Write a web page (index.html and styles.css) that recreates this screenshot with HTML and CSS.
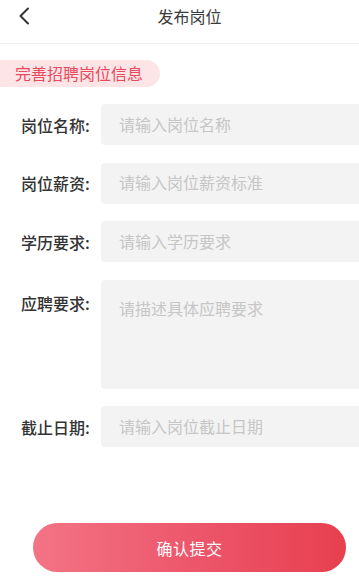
FILE: index.html
```html
<!DOCTYPE html>
<html lang="zh">
<head>
<meta charset="utf-8">
<link rel="stylesheet" href="styles.css">
</head>
<body>
<div class="page">
  <header class="topbar">
    <span class="back">
      <svg width="12" height="18" viewBox="0 0 12 18"><path d="M10 1.5 L2.5 9 L10 16.5" fill="none" stroke="#333" stroke-width="2" stroke-linecap="round" stroke-linejoin="round"/></svg>
    </span>
    <h1 class="title">发布岗位</h1>
  </header>
  <div class="tag">完善招聘岗位信息</div>
  <form class="form">
    <div class="row">
      <label class="label">岗位名称:</label>
      <input class="field" placeholder="请输入岗位名称">
    </div>
    <div class="row">
      <label class="label">岗位薪资:</label>
      <input class="field" placeholder="请输入岗位薪资标准">
    </div>
    <div class="row">
      <label class="label">学历要求:</label>
      <input class="field" placeholder="请输入学历要求">
    </div>
    <div class="row row-top">
      <label class="label label-top">应聘要求:</label>
      <textarea class="field area" placeholder="请描述具体应聘要求"></textarea>
    </div>
    <div class="row">
      <label class="label">截止日期:</label>
      <input class="field" placeholder="请输入岗位截止日期">
    </div>
  </form>
  <div class="actions">
    <button class="submit" type="button">确认提交</button>
  </div>
</div>
</body>
</html>
```

FILE: styles.css
```css
* { box-sizing: border-box; }
html, body { margin: 0; padding: 0; background: #fff; }
body {
  font-family: "Noto Sans CJK SC", "Noto Sans", sans-serif;
  color: #333;
  width: 359px;
  height: 585px;
  overflow: hidden;
}
.page { display: flex; flex-direction: column; }
.topbar {
  position: relative;
  height: 44px;
  border-bottom: 1px solid #f1f1f1;
  display: flex;
  align-items: center;
  justify-content: center;
  padding-left: 20px;
}
.back {
  position: absolute;
  left: 18px;
  top: 7px;
  display: flex;
}
.title {
  margin: 0 0 11px;
  font-size: 16px;
  font-weight: 400;
  color: #3a3a3a;
  line-height: 22px;
}
.tag {
  align-self: flex-start;
  margin-top: 16px;
  height: 27px;
  padding: 0 15px 0 15px;
  width: 160px;
  background: #fde4e7;
  color: #e84a5c;
  font-size: 16px;
  line-height: 27px;
  border-radius: 0 14px 14px 0;
  white-space: nowrap;
}
.form {
  margin: 17px 0 0;
  display: flex;
  flex-direction: column;
  gap: 17.5px;
}
.row { display: flex; align-items: center; }
.row-top { align-items: flex-start; }
.label {
  width: 101px;
  padding-left: 21px;
  font-size: 16px;
  font-weight: 500;
  color: #333;
  line-height: 22px;
  flex-shrink: 0;
}
.label-top { padding-top: 12px; }
.field {
  flex: 1;
  height: 41px;
  border: 0;
  outline: 0;
  border-radius: 4px 0 0 4px;
  background: #f3f3f3;
  padding: 0 0 2px 18px;
  font-family: inherit;
  font-size: 16px;
  color: #333;
}
.field::placeholder { color: #c6c6c6; }
.area {
  height: 109px;
  resize: none;
  padding: 16px 18px;
  line-height: 24px;
}
.actions {
  margin-top: 76px;
  padding: 0 13px 0 33px;
}
.submit {
  width: 100%;
  height: 49px;
  border: 0;
  border-radius: 25px;
  background: linear-gradient(90deg, #f37485 0%, #ec5469 55%, #e7404f 100%);
  color: #fff;
  font-family: inherit;
  font-size: 16px;
  letter-spacing: 0.5px;
}
```
